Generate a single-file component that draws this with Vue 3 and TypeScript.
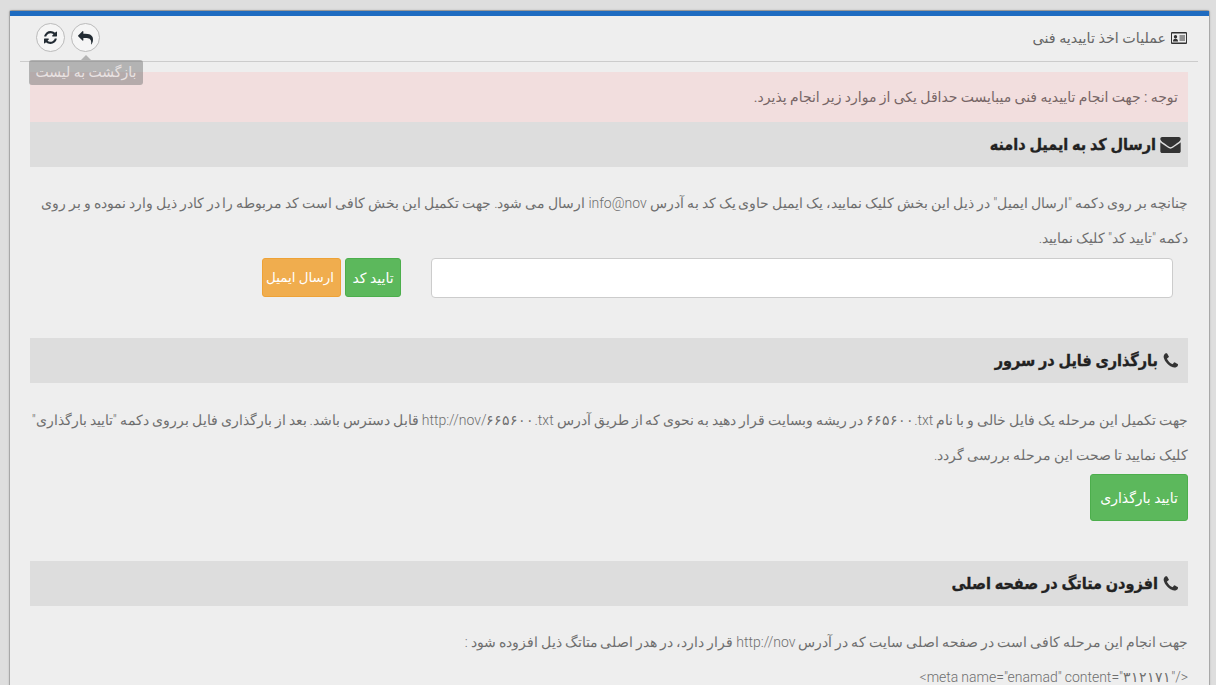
<script setup lang="ts">
const phone = "M1600 1240q0 27-10 70.500t-21 68.500q-21 50-122 106-94 51-186 51-27 0-53-3.500t-57.500-12.500-47-14.500-55.500-20.500-49-18q-98-35-175-83-127-79-264-216t-216-264q-48-77-83-175-3-9-18-49t-20.500-55.500-14.500-47-12.500-57.500-3.500-53q0-92 51-186 56-101 106-122 25-11 68.500-21t70.500-10q14 0 21 3 18 6 53 76 11 19 30 54t35 63.500 31 53.500q3 4 17.500 25t21.500 35.500 7 28.500q0 20-28.500 50t-62 55-62 53-28.500 46q0 9 5 22.500t8.500 20.500 14 24 11.500 19q76 137 174 235t235 174q2 1 19 11.500t24 14 20.500 8.500 22.500 5q18 0 46-28.500t53-62 55-62 50-28.500q14 0 28.500 7t35.500 21.500 25 17.500q25 15 53.500 31t63.500 35 54 30q70 35 76 53 3 7 3 21z";
const envelope = "M1792 710v794q0 66-47 113t-113 47h-1472q-66 0-113-47t-47-113v-794q44 49 101 87 362 246 497 345 57 42 92.500 65.500t94.500 48 110 24.500h2q51 0 110-24.500t94.500-48 92.500-65.500q170-123 498-345 57-39 100-87zm0-294q0 79-49 151t-122 123q-376 261-468 325-10 7-42.500 30.500t-54 38-52 32.500-57.500 27-50 9h-2q-23 0-50-9t-57.500-27-52-32.500-54-38-42.500-30.500q-91-64-262-182.500t-205-142.500q-62-42-117-115.500t-55-136.500q0-78 41.500-130t118.500-52h1472q65 0 112.500 47t47.500 113z";
const reply = "M1792 1120q0 166-127 451-3 7-10.500 24t-13.500 30-13 22q-12 17-28 17-15 0-23.500-10t-8.500-25q0-9 2.500-26.500t2.500-23.500q5-68 5-123 0-101-17.500-181t-48.500-138.500-80-101-105.500-69.500-133-42.500-154-21.500-175.500-6h-224v256q0 26-19 45t-45 19-45-19l-512-512q-19-19-19-45t19-45l512-512q19-19 45-19t45 19 19 45v256h224q713 0 875 403 53 134 53 333z";
const refresh = "M1639 1056q0 5-1 7-64 268-268 434.500t-478 166.500q-146 0-282.500-55t-243.500-157l-129 129q-19 19-45 19t-45-19-19-45v-448q0-26 19-45t45-19h448q26 0 45 19t19 45-19 45l-137 137q71 66 161 102t187 36q134 0 250-65t186-179q11-17 53-117 8-23 30-23h192q13 0 22.500 9.500t9.500 22.500zm25-800v448q0 26-19 45t-45 19h-448q-26 0-45-19t-19-45 19-45l138-138q-148-137-349-137-134 0-250 65t-186 179q-11 17-53 117-8 23-30 23h-199q-13 0-22.500-9.500t-9.500-22.500v-7q65-268 270-434.500t480-166.500q146 0 284 55.500t245 156.500l130-129q19-19 45-19t45 19 19 45z";
</script>

<template>
  <div class="page" dir="rtl">
    <div class="panel">
      <header class="head">
        <div class="title">
          <svg class="idcard" viewBox="0 0 16 12" width="16" height="12">
            <path fill="#333" fill-rule="evenodd" d="M1 0h14a1 1 0 0 1 1 1v10a1 1 0 0 1-1 1H1a1 1 0 0 1-1-1V1a1 1 0 0 1 1-1zm0 1.500v9h14v-9z" />
            <path fill="#333" d="M2 9.500c0-1.800.6-2.700 2.500-2.700s2.500.9 2.500 2.700zM4.500 3a1.600 1.600 0 1 1 0 3.400 1.600 1.600 0 0 1 0-3.400zM8.500 3.500h5.500v1H8.500zM8.500 5.500h5.500v1H8.500zM8.500 7.500h5.500v1H8.500z" />
          </svg>
          <span>عملیات اخذ تاییدیه فنی</span>
        </div>
        <div class="tools">
          <button class="round" type="button">
            <svg viewBox="0 128 1792 1536" width="15" height="14"><path fill="#222b33" :d="reply" /></svg>
          </button>
          <button class="round" type="button">
            <svg viewBox="128 128 1536 1536" width="13" height="13"><path fill="#222b33" :d="refresh" /></svg>
          </button>
          <div class="tip">بازگشت به لیست</div>
        </div>
      </header>

      <main class="content">
        <div class="alert">توجه : جهت انجام تاییدیه فنی میبایست حداقل یکی از موارد زیر انجام پذیرد.</div>

        <section class="sec first">
          <h3 class="sec-title">
            <svg class="envelope" viewBox="0 256 1792 1408" width="21" height="16"><path fill="#333" :d="envelope" /></svg>
            <span>ارسال کد به ایمیل دامنه</span>
          </h3>
          <p class="text">چنانچه بر روی دکمه "ارسال ایمیل" در ذیل این بخش کلیک نمایید، یک ایمیل حاوی یک کد به آدرس info@nov ارسال می شود. جهت تکمیل این بخش کافی است کد مربوطه را در کادر ذیل وارد نموده و بر روی دکمه "تایید کد" کلیک نمایید.</p>
          <div class="verify">
            <input class="field" type="text" />
            <button class="btn green" type="button">تایید کد</button>
            <button class="btn orange" type="button">ارسال ایمیل</button>
          </div>
        </section>

        <section class="sec second">
          <h3 class="sec-title">
            <svg viewBox="128 128 1472 1536" width="15" height="16"><path fill="#333" :d="phone" /></svg>
            <span>بارگذاری فایل در سرور</span>
          </h3>
          <p class="text">جهت تکمیل این مرحله یک فایل خالی و با نام <bdi dir="ltr">۶۶۵۶۰۰.txt</bdi> در ریشه وبسایت قرار دهید به نحوی که از طریق آدرس http://nov/۶۶۵۶۰۰.txt قابل دسترس باشد. بعد از بارگذاری فایل برروی دکمه "تایید بارگذاری" کلیک نمایید تا صحت این مرحله بررسی گردد.</p>
          <button class="btn green large" type="button">تایید بارگذاری</button>
        </section>

        <section class="sec third">
          <h3 class="sec-title">
            <svg viewBox="128 128 1472 1536" width="15" height="16"><path fill="#333" :d="phone" /></svg>
            <span>افزودن متاتگ در صفحه اصلی</span>
          </h3>
          <p class="text">جهت انجام این مرحله کافی است در صفحه اصلی سایت که در آدرس http://nov قرار دارد، در هدر اصلی متاتگ ذیل افزوده شود :</p>
          <p class="text code" dir="ltr">&lt;meta name="enamad" content="۳۱۲۱۷۱"/&gt;</p>
        </section>
      </main>
    </div>
  </div>
</template>

<style scoped>
.page {
  height: 685px;
  overflow: hidden;
  background: #dedede;
  padding: 10px 6px 0 9px;
  box-sizing: border-box;
  font-family: Roboto, "DejaVu Sans", sans-serif;
  font-size: 14px;
  color: #666;
}
.panel {
  height: 700px;
  background: #eee;
  border: 1px solid #a8a8a8;
  border-top: 1px solid #999;
  border-radius: 3px 3px 0 0;
  box-shadow: 0 0 2px #bbb;
}
.panel::before {
  content: "";
  display: block;
  height: 5px;
  background: #1e6bc0;
}
.head {
  position: relative;
  display: flex;
  justify-content: space-between;
  align-items: center;
  height: 43px;
  margin: 0 11px 10px 10px;
  border-bottom: 1px solid #ccc;
  padding: 0 11px 2px 16px;
  box-sizing: content-box;
}
.title {
  display: flex;
  align-items: center;
  gap: 5px;
  color: #666;
  font-size: 14.3px;
}
.tools {
  position: relative;
  display: flex;
  gap: 6px;
  align-items: center;
}
.round {
  width: 29px;
  height: 29px;
  padding: 0;
  display: flex;
  align-items: center;
  justify-content: center;
  border-radius: 50%;
  border: 1px solid #bbb;
  background: #f5f5f5;
}
.tip {
  position: absolute;
  top: 37px;
  right: -43px;
  width: 114px;
  height: 25px;
  line-height: 25px;
  text-align: center;
  border-radius: 3px;
  background: rgba(120, 120, 120, 0.5);
  color: #e8e2e2;
  font-size: 14px;
  white-space: nowrap;
}
.tip::before {
  content: "";
  position: absolute;
  top: -5px;
  right: 52px;
  border: 5px solid transparent;
  border-top: 0;
  border-bottom-color: rgba(120, 120, 120, 0.5);
}
.content {
  margin: 0 21px 0 20px;
}
.alert {
  height: 50px;
  line-height: 50px;
  padding: 0 10px;
  background: #f2dede;
  color: #766;
  word-spacing: -0.15px;
}
.sec-title {
  display: flex;
  align-items: center;
  gap: 5px;
  height: 45px;
  margin: 0;
  padding: 0 10px;
  background: #ddd;
  color: #222;
  font-stretch: condensed;
  font-size: 16.1px;
  font-weight: 700;
  -webkit-text-stroke: 0.3px #222;
}
.envelope { margin-right: -3px; margin-left: -1px; }
.text {
  margin: 0;
  line-height: 35px;
  color: #6e6e6e;
  font-weight: 300;
  word-spacing: -0.45px;
}
.first .text { margin-top: 19px; }
.verify {
  display: flex;
  align-items: flex-start;
  margin-top: 2px;
  padding-right: 15px;
  height: 40px;
}
.field {
  width: 742px;
  height: 40px;
  box-sizing: border-box;
  border: 1px solid #ccc;
  border-radius: 4px;
  background: #fff;
  margin-left: 30px;
}
.btn {
  height: 39px;
  padding: 0 6px;
  border-radius: 3px;
  border: 1px solid transparent;
  color: #fff;
  font: inherit;
  font-size: 14px;
  white-space: nowrap;
}
.btn.green { background: #5cb85c; border-color: #4cae4c; width: 56px; }
.btn.orange { background: #f0ad4e; border-color: #eea236; width: 79px; margin-right: 4px; font-size: 13.4px; }
.btn.large { display: block; width: 98px; height: 47px; margin-top: 1px; }
.second { margin-top: 40px; }
.second .text { margin-top: 20px; }
.third { margin-top: 40px; }
.third .text:first-of-type { margin-top: 19px; }
.code { text-align: right; }
</style>

<style>
html, body { margin: 0; overflow: hidden; }
</style>
